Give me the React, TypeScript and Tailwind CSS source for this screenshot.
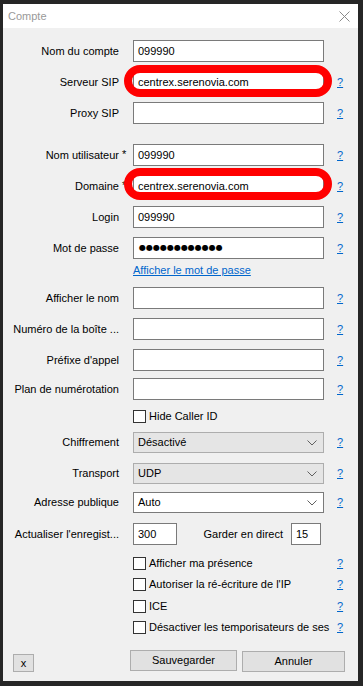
import React from "react";

const F = { fontFamily: '"Liberation Sans", Arial, sans-serif' };

function Help() {
  return (
    <span className="ml-[13px] text-[11px] leading-none text-[#0066cc] underline">?</span>
  );
}

function Chevron() {
  return (
    <svg width="10" height="6" viewBox="0 0 10 6" className="absolute right-[6px] top-1/2 -translate-y-1/2">
      <path d="M0.5 0.5 L5 5 L9.5 0.5" fill="none" stroke="#606060" strokeWidth="1" />
    </svg>
  );
}

function Row({
  label,
  star,
  value,
  help = true,
  oval,
  className = "",
  children,
}: {
  label: string;
  star?: boolean;
  value?: string;
  help?: boolean;
  oval?: "a" | "b";
  className?: string;
  children?: React.ReactNode;
}) {
  return (
    <div className={"flex h-[22px] items-center " + className}>
      <div className="w-[116px] shrink-0 text-right text-[11px] leading-none text-black whitespace-nowrap">
        <span className="relative">
          {label}
          {star && <span className="absolute left-[calc(100%+3px)] top-0">*</span>}
        </span>
      </div>
      <div className="relative ml-[14px] h-full w-[191px] shrink-0">
        {children ?? (
          <div className="flex h-full w-full items-center border border-[#7a7a7a] bg-white pl-[4px] text-[11px] leading-none text-black">
            {value}
          </div>
        )}
        {oval === "a" && (
          <div className="absolute -left-[9px] -right-[8px] -top-[6px] -bottom-[4px] rounded-full border-[8px] border-[#ff0000]" />
        )}
        {oval === "b" && (
          <div className="absolute -left-[9px] -right-[8px] -top-[7px] -bottom-[3px] rounded-full border-[8px] border-[#ff0000]" />
        )}
      </div>
      {help && <Help />}
    </div>
  );
}

function Select({ label, value, disabled, className = "" }: { label: string; value: string; disabled?: boolean; className?: string }) {
  return (
    <div className={"flex h-[21px] items-center " + className}>
      <div className="w-[116px] shrink-0 text-right text-[11px] leading-none text-black whitespace-nowrap">{label}</div>
      <div
        className={
          "relative ml-[14px] flex h-full w-[191px] shrink-0 items-center pl-[4px] text-[11px] leading-none text-black border " +
          (disabled ? "bg-[#e5e5e5] border-[#adadad]" : "bg-white border-[#7a7a7a]")
        }
      >
        {value}
        <Chevron />
      </div>
      <Help />
    </div>
  );
}

function Check({ label, help = true, className = "" }: { label: string; help?: boolean; className?: string }) {
  return (
    <div className={"flex h-[13px] items-center " + className}>
      <div className="w-[130px] shrink-0" />
      <div className="flex w-[191px] shrink-0 items-center">
        <div className="h-[13px] w-[13px] shrink-0 border border-[#333333] bg-white" />
        <span className="ml-[3px] whitespace-nowrap text-[11px] leading-none text-black">{label}</span>
      </div>
      {help && <Help />}
    </div>
  );
}

export default function App() {
  return (
    <div style={F} className="flex h-[686px] w-[363px] flex-col bg-[#262626] pb-[5px] pl-[3px] pr-[5px] pt-[4px]">
      <div className="relative flex h-[24px] shrink-0 items-center bg-white pl-[5px] text-[11px] text-[#999999]">
        Compte
        <svg width="11" height="11" viewBox="0 0 11 11" className="absolute right-[8px] top-[7px]">
          <path d="M0.5 0.5 L10.5 10.5 M10.5 0.5 L0.5 10.5" stroke="#8a8a8a" strokeWidth="1" />
        </svg>
      </div>
      <div className="flex flex-1 flex-col bg-[#f0f0f0] pt-[12px]">
        <Row label="Nom du compte" value="099990" help={false} />
        <Row label="Serveur SIP" value="centrex.serenovia.com" oval="a" className="mt-[9px]" />
        <Row label="Proxy SIP" className="mt-[9px]" />
        <Row label="Nom utilisateur" star value="099990" className="mt-[20px]" />
        <Row label="Domaine" star value="centrex.serenovia.com" oval="b" className="mt-[9px]" />
        <Row label="Login" value="099990" className="mt-[9px]" />
        <Row label="Mot de passe" className="mt-[9px]">
          <div className="flex h-full w-full items-center border border-[#7a7a7a] bg-white pl-[5px] text-black">
            <span className="text-[8px] leading-none tracking-[0px]" style={{ fontFamily: '"DejaVu Sans", sans-serif' }}>
              ●●●●●●●●●●●●
            </span>
          </div>
        </Row>
        <div className="mt-[4px] flex h-[14px] items-center">
          <div className="w-[130px] shrink-0" />
          <span className="text-[11px] leading-none text-[#0066cc] underline">Afficher le mot de passe</span>
        </div>
        <Row label="Afficher le nom" className="mt-[10px]" />
        <Row label="Numéro de la boîte ..." className="mt-[9px]" />
        <Row label="Préfixe d'appel" className="mt-[9px]" />
        <Row label="Plan de numérotation" className="mt-[7px]" />
        <Check label="Hide Caller ID" help={false} className="mt-[10px]" />
        <Select label="Chiffrement" value="Désactivé" disabled className="mt-[9px]" />
        <Select label="Transport" value="UDP" disabled className="mt-[10px]" />
        <Select label="Adresse publique" value="Auto" className="mt-[8px]" />
        <div className="mt-[10px] flex h-[22px] items-center">
          <div className="w-[116px] shrink-0 text-right text-[11px] leading-none text-black whitespace-nowrap">
            Actualiser l'enregist...
          </div>
          <div className="ml-[14px] flex h-full w-[44px] items-center border border-[#7a7a7a] bg-white pl-[4px] text-[11px] leading-none text-black">
            300
          </div>
          <div className="w-[114px] shrink-0 pr-[8px] text-right text-[11px] leading-none text-black whitespace-nowrap">
            Garder en direct
          </div>
          <div className="flex h-full w-[30px] items-center border border-[#7a7a7a] bg-white pl-[4px] text-[11px] leading-none text-black">
            15
          </div>
        </div>
        <Check label="Afficher ma présence" className="mt-[12px]" />
        <Check label="Autoriser la ré-écriture de l'IP" className="mt-[8px]" />
        <Check label="ICE" className="mt-[9px]" />
        <Check label="Désactiver les temporisateurs de ses" className="mt-[8px]" />
        <div className="mt-[16px] flex h-[22px] items-start">
          <div className="ml-[10px] mt-[4px] flex h-[18px] w-[21px] items-center justify-center border border-[#adadad] bg-[#e1e1e1] text-[11px] leading-none text-black">
            x
          </div>
          <div className="ml-[96px] flex h-[21px] w-[107px] items-center justify-center border border-[#adadad] bg-[#e1e1e1] text-[11px] leading-none text-black">
            Sauvegarder
          </div>
          <div className="ml-[5px] mt-[1px] flex h-[21px] w-[103px] items-center justify-center border border-[#adadad] bg-[#e1e1e1] text-[11px] leading-none text-black">
            Annuler
          </div>
        </div>
      </div>
    </div>
  );
}
